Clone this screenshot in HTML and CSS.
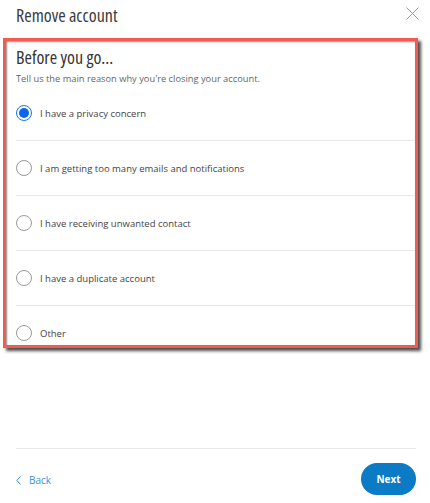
FILE: index.html
```html
<!DOCTYPE html>
<html lang="en">
<head>
    <meta charset="UTF-8">
    <meta name="viewport" content="width=device-width, initial-scale=1.0">
    <title>Remove account</title>
    <link rel="stylesheet" href="styles.css">
</head>
<body>
    <div class="dialog">
        <header class="dialog-header">
            <h1>Remove account</h1>
            <button class="close-button" aria-label="Close">
                <svg width="13" height="13" viewBox="0 0 13 13">
                    <path d="M0.5 0.5 L12.5 12.5 M12.5 0.5 L0.5 12.5" stroke="#9a9a9a" stroke-width="1" fill="none"/>
                </svg>
            </button>
        </header>

        <section class="reasons">
            <h2>Before you go...</h2>
            <p class="hint">Tell us the main reason why you're closing your account.</p>
            <ul class="options">
                <li><label><span class="radio checked"></span>I have a privacy concern</label></li>
                <li><label><span class="radio"></span>I am getting too many emails and notifications</label></li>
                <li><label><span class="radio"></span>I have receiving unwanted contact</label></li>
                <li><label><span class="radio"></span>I have a duplicate account</label></li>
                <li><label><span class="radio"></span>Other</label></li>
            </ul>
        </section>

        <footer class="dialog-footer">
            <a class="back-link" href="#">
                <svg width="5" height="9" viewBox="0 0 5 9">
                    <path d="M4.5 0.5 L0.8 4.5 L4.5 8.5" stroke="#3a8fd3" stroke-width="1" fill="none"/>
                </svg>
                Back
            </a>
            <button class="next-button">Next</button>
        </footer>
    </div>
</body>
</html>
```

FILE: styles.css
```css
body {
    margin: 0;
    font-family: "Open Sans", Arial, sans-serif;
    background-color: #ffffff;
    color: #333333;
}

.dialog {
    width: 430px;
    height: 503px;
    display: flex;
    flex-direction: column;
}

/* Header */
.dialog-header {
    height: 38px;
    display: flex;
    justify-content: space-between;
    align-items: flex-start;
    padding: 0 11px 0 16px;
    box-sizing: border-box;
}

.dialog-header h1 {
    margin: 2px 0 0;
    font-size: 18px;
    font-stretch: 82%;
    font-weight: 400;
    line-height: 26px;
    color: #3a3a3a;
}

.close-button {
    margin-top: 7px;
    padding: 0;
    border: none;
    background: none;
    cursor: pointer;
    line-height: 0;
}

/* Highlighted reasons box */
.reasons {
    margin: 0 12px 0 3px;
    border: 3px solid #f45b50;
    box-shadow: 3px 3px 3px rgba(0, 0, 0, 0.7), inset 1px 1px 2px rgba(0, 0, 0, 0.45);
    padding: 4px 0 0 10px;
    height: 310px;
    box-sizing: border-box;
    overflow: hidden;
}

.reasons h2 {
    margin: 0;
    font-size: 18px;
    font-stretch: 85%;
    font-weight: 500;
    line-height: 24px;
    color: #333333;
}

.hint {
    margin: 3px 0 0;
    font-size: 9.3px;
    line-height: 14px;
    color: #666666;
}

.options {
    list-style: none;
    margin: 0;
    padding: 0;
}

.options li {
    height: 55px;
    border-bottom: 1px solid #e8e8e8;
    box-sizing: border-box;
}

.options label {
    height: 100%;
    display: flex;
    align-items: center;
    gap: 8px;
    font-size: 9.5px;
    color: #444444;
    cursor: pointer;
}

.radio {
    width: 16px;
    height: 16px;
    border: 1px solid #9a9a9a;
    border-radius: 50%;
    box-sizing: border-box;
    flex-shrink: 0;
    display: flex;
    align-items: center;
    justify-content: center;
}

.radio.checked {
    border-color: #1a73e8;
}

.radio.checked::after {
    content: "";
    width: 10px;
    height: 10px;
    border-radius: 50%;
    background-color: #0b66f0;
}

/* Footer */
.dialog-footer {
    margin: auto 14px 0 16px;
    border-top: 1px solid #e6e6e6;
    padding: 14px 0 8px;
    display: flex;
    justify-content: space-between;
    align-items: center;
}

.back-link {
    display: flex;
    align-items: center;
    gap: 8px;
    font-size: 10px;
    color: #3a8fd3;
    text-decoration: none;
    padding-top: 2px;
}

.next-button {
    width: 55px;
    height: 32px;
    border: none;
    border-radius: 16px;
    background-color: #0a7bc4;
    color: #ffffff;
    font-family: inherit;
    font-size: 10px;
    font-weight: 700;
    cursor: pointer;
}
```
